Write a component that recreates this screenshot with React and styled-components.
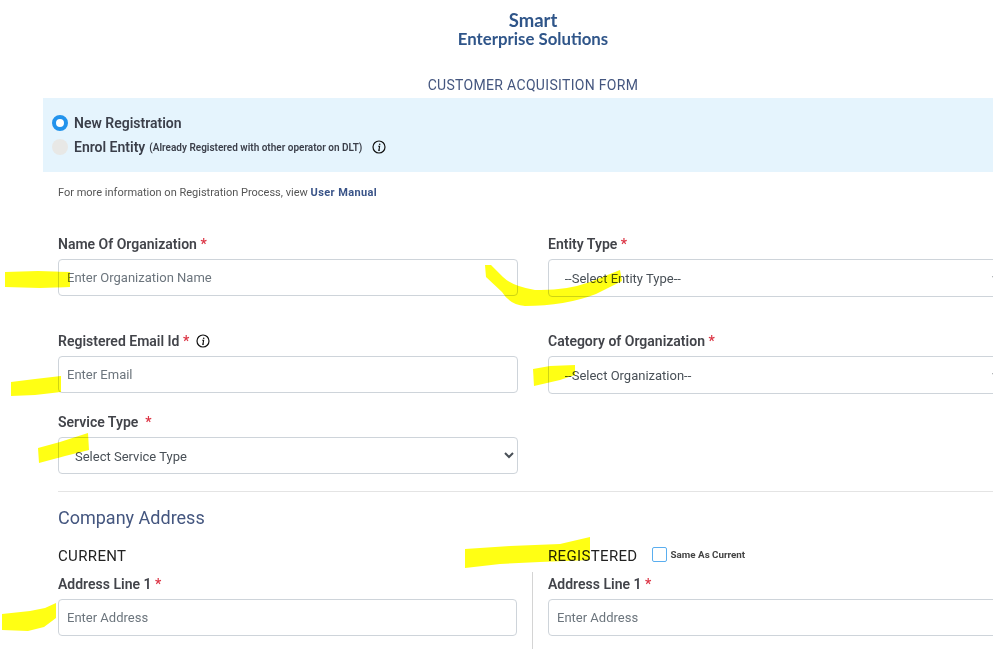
import styled, { createGlobalStyle } from "styled-components"

const GlobalStyle = createGlobalStyle`
    html, body {
        margin: 0;
        height: 649px;
        overflow: hidden;
        background: #FFFFFF;
    }
    body {
        font-family: "Roboto", "Liberation Sans", sans-serif;
    }
    * {
        box-sizing: border-box;
    }
`

function InfoIcon() {
    return (
        <svg width="14" height="14" viewBox="0 0 14 14" fill="none">
            <circle cx="7" cy="7" r="6" stroke="#111111" strokeWidth="1.2" />
            <path d="M6.2 6.2H7.6L7 10.2M6 10.2H8" stroke="#111111" strokeWidth="1.1" />
            <circle cx="7.7" cy="4.2" r="0.8" fill="#111111" />
        </svg>
    )
}

// the yellow highlighter strokes someone painted over the screenshot
function Highlights() {
    return (
        <HighlightLayer viewBox="0 0 993 649" width="993" height="649">
            <path d="M5 272 L38 271 L70 272 L70 287 L40 288 L5 287 Z" />
            <path d="M485 265 L491 265 L503 277 Q512 286 535 290 Q565 291 590 282 L620 270 L622 281 L596 294 Q565 306 525 306 Q510 305 502 292 L486 277 Z" />
            <path d="M533 369 L550 366 L575 365 L575 375 L560 380 L534 386 Z" />
            <path d="M11 382 L35 379 L61 376 L61 392 L35 395 L11 396 Z" />
            <path d="M38 448 L60 442 L88 433 L89 450 L65 456 L39 463 Z" />
            <path d="M465 549 L510 546 L560 544 L590 537 L590 560 L540 562 L500 564 L465 568 Z" />
            <path d="M2 614 L30 611 L45 608 L56 603 L56 618 L44 627 L28 631 L2 630 Z" />
        </HighlightLayer>
    )
}

export default function App() {
    return (
        <Page>
            <GlobalStyle />
            <Header>
                <BrandTop>Smart</BrandTop>
                <BrandBottom>Enterprise Solutions</BrandBottom>
                <FormTitle>CUSTOMER ACQUISITION FORM</FormTitle>
            </Header>

            <RegistrationBand>
                <RadioRow>
                    <Radio $checked />
                    <RadioLabel>New Registration</RadioLabel>
                </RadioRow>
                <RadioRow>
                    <Radio />
                    <RadioLabel>Enrol Entity</RadioLabel>
                    <RadioHint>(Already Registered with other operator on DLT)</RadioHint>
                    <InfoIcon />
                </RadioRow>
            </RegistrationBand>

            <Form>
                <Note>For more information on Registration Process, view <NoteLink>User Manual</NoteLink></Note>

                <FieldGrid>
                    <Field>
                        <Label>Name Of Organization <Star>*</Star></Label>
                        <Input placeholder="Enter Organization Name" />
                    </Field>
                    <Field>
                        <Label>Entity Type <Star>*</Star></Label>
                        <Select $wide><option>--Select Entity Type--</option></Select>
                    </Field>
                    <Field $top={36}>
                        <Label>Registered Email Id <Star>*</Star> <LabelIcon><InfoIcon /></LabelIcon></Label>
                        <Input placeholder="Enter Email" />
                    </Field>
                    <Field $top={36}>
                        <Label>Category of Organization <Star>*</Star></Label>
                        <Select $wide><option>--Select Organization--</option></Select>
                    </Field>
                    <Field $top={20}>
                        <Label>Service Type &nbsp;<Star>*</Star></Label>
                        <Select><option>Select Service Type</option></Select>
                    </Field>
                </FieldGrid>

                <Divider />
                <SectionTitle>Company Address</SectionTitle>

                <AddressHeads>
                    <AddressHead>CURRENT</AddressHead>
                    <AddressHead>
                        REGISTERED
                        <SameAs>
                            <CheckBox />
                            Same As Current
                        </SameAs>
                    </AddressHead>
                </AddressHeads>

                <AddressColumns>
                    <AddressColumn>
                        <Label>Address Line 1 <Star>*</Star></Label>
                        <Input placeholder="Enter Address" />
                    </AddressColumn>
                    <AddressColumn $right>
                        <Label>Address Line 1 <Star>*</Star></Label>
                        <Input $wide placeholder="Enter Address" />
                    </AddressColumn>
                </AddressColumns>
            </Form>

            <Highlights />
        </Page>
    )
}

const Page = styled.div`
    position: relative;
    width: 993px;
    height: 649px;
    overflow: hidden;
    background: #FFFFFF;
`
const Header = styled.header`
    display: flex;
    flex-direction: column;
    align-items: center;
    width: 1066px;
    padding-top: 10px;
`
const BrandTop = styled.div`
    font-family: "Lato", sans-serif;
    font-weight: 700;
    font-size: 18.5px;
    line-height: 20px;
    color: #2F5589;
`
const BrandBottom = styled.div`
    font-family: "Lato", sans-serif;
    font-weight: 700;
    font-size: 16.8px;
    line-height: 17px;
    color: #2F5589;
`
const FormTitle = styled.div`
    margin-top: 29px;
    font-size: 14px;
    line-height: 18px;
    letter-spacing: 0.32px;
    color: #44567F;
`
const RegistrationBand = styled.section`
    display: flex;
    flex-direction: column;
    gap: 8px;
    width: 950px;
    height: 74px;
    margin: 4px 0 0 43px;
    padding: 17px 0 0 9px;
    background: #E5F4FD;
`
const RadioRow = styled.div`
    display: flex;
    align-items: center;
    height: 16px;
`
const Radio = styled.span`
    flex: none;
    width: 16px;
    height: 16px;
    margin-right: 6px;
    border-radius: 50%;
    background: ${props => props.$checked ? "#FFFFFF" : "#E8E8E6"};
    border: ${props => props.$checked ? "4px solid #2393EC" : "none"};
`
const RadioLabel = styled.span`
    font-weight: 600;
    font-size: 14px;
    color: #3B3F4A;
`
const RadioHint = styled.span`
    margin: 1px 10px 0 4px;
    font-weight: 600;
    font-size: 10px;
    color: #3B3F4A;
`
const Form = styled.main`
    padding-left: 58px;
`
const Note = styled.p`
    margin: 14px 0 0;
    font-size: 11px;
    line-height: 13px;
    color: #555555;
`
const NoteLink = styled.span`
    font-weight: 700;
    font-size: 11px;
    letter-spacing: 0.4px;
    color: #3A5488;
`
const FieldGrid = styled.div`
    display: grid;
    grid-template-columns: 460px 458px;
    column-gap: 30px;
    margin-top: 37px;
`
const Field = styled.div`
    display: flex;
    flex-direction: column;
    margin-top: ${props => props.$top || 0}px;
`
const Label = styled.label`
    display: flex;
    align-items: center;
    height: 16px;
    margin-bottom: 7px;
    font-weight: 600;
    font-size: 14px;
    white-space: pre;
    color: #42444A;
`
const LabelIcon = styled.span`
    display: flex;
    margin-left: 7px;
`
const Star = styled.span`
    color: #DC3545;
`
const Input = styled.input`
    width: ${props => props.$wide ? "460px" : "100%"};
    height: 37px;
    padding: 0 8px;
    border: 1px solid #CED4DA;
    border-radius: 4px;
    outline: none;
    font-family: inherit;
    font-size: 13px;
    color: #495057;
    &::placeholder {
        color: #6C757D;
        opacity: 1;
    }
`
const Select = styled.select`
    width: 100%;
    height: ${props => props.$wide ? "38px" : "37px"};
    padding: 1px ${props => props.$wide ? 11.5 : 12}px 0;
    background: #FFFFFF;
    border: 1px solid #CED4DA;
    border-radius: 4px;
    outline: none;
    font-family: inherit;
    font-size: 13px;
    color: #495057;
`
const Divider = styled.hr`
    width: 935px;
    height: 1px;
    margin: 17px 0 0;
    border: none;
    background: #E4E4E4;
`
const SectionTitle = styled.h2`
    margin: 15px 0 0;
    font-weight: 400;
    font-size: 18px;
    line-height: 22px;
    color: #44567F;
`
const AddressHeads = styled.div`
    display: grid;
    grid-template-columns: 490px 1fr;
    margin-top: 19px;
`
const AddressHead = styled.div`
    display: flex;
    align-items: center;
    height: 16px;
    font-size: 15px;
    letter-spacing: 0.35px;
    color: #222222;
`
const SameAs = styled.label`
    display: flex;
    align-items: center;
    gap: 4px;
    margin: -3px 0 0 14px;
    font-weight: 700;
    font-size: 9.8px;
    letter-spacing: 0;
    color: #444444;
`
const CheckBox = styled.span`
    width: 15px;
    height: 15px;
    background: #FFFFFF;
    border: 1px solid #5AAEEF;
    border-radius: 2px;
`
const AddressColumns = styled.div`
    display: grid;
    grid-template-columns: 474px 1fr;
    height: 77px;
    margin-top: 8px;
`
const AddressColumn = styled.div`
    display: flex;
    flex-direction: column;
    padding-top: 4px;
    padding-right: ${props => props.$right ? 0 : 15}px;
    padding-left: ${props => props.$right ? 15 : 0}px;
    border-left: ${props => props.$right ? "1px solid #D4D4D4" : "none"};
`
const HighlightLayer = styled.svg`
    position: absolute;
    top: 0;
    left: 0;
    pointer-events: none;
    mix-blend-mode: multiply;
    fill: #FFFF14;
`
